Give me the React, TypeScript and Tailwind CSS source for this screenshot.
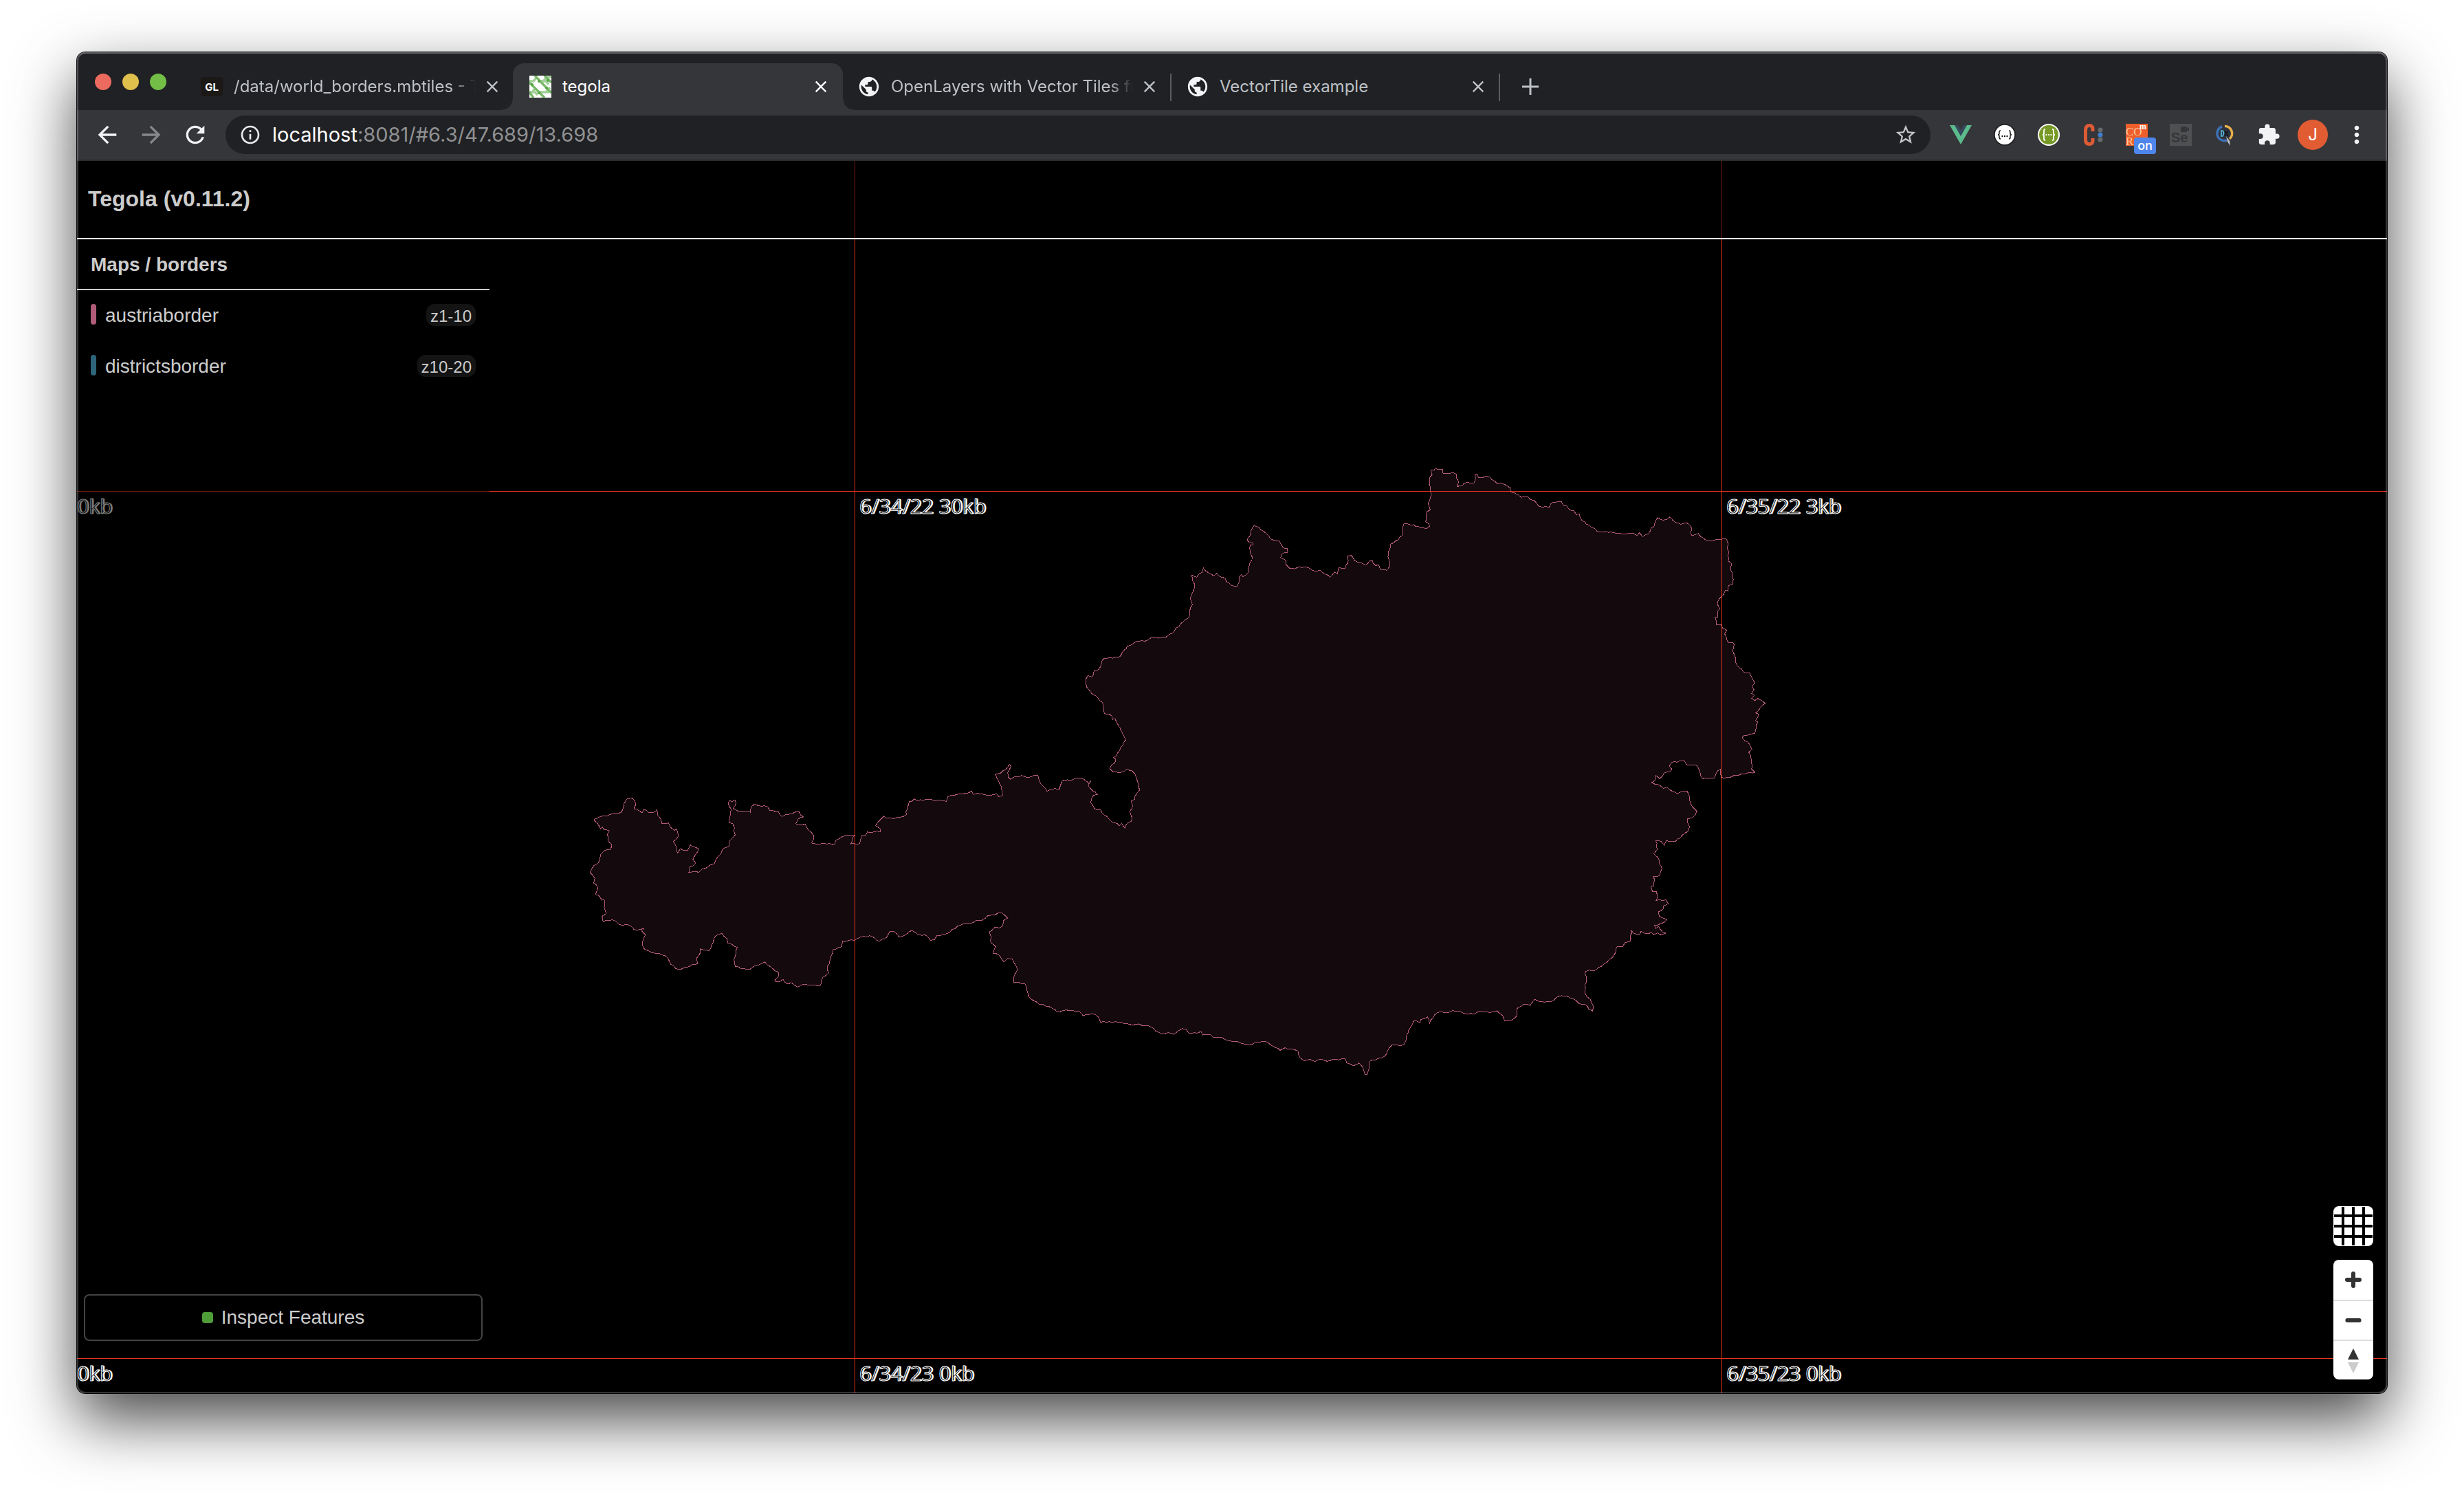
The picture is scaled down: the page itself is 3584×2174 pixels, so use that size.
import type { ReactNode } from "react";
import {
  MdArrowBack,
  MdArrowForward,
  MdClose,
  MdExtension,
  MdInfoOutline,
  MdMoreVert,
  MdPublic,
  MdRefresh,
  MdStarBorder,
} from "react-icons/md";

/* ------------------------------------------------------------------ */
/* Country outline, stored as sections with their own origin and scale */
/* ------------------------------------------------------------------ */

type Section = { x: number; y: number; sx: number; sy: number; points: string };

const sections: Section[] = [
  {
    x: 840,
    y: 1080,
    sx: 1.823,
    sy: 3,
    points:
      "33,566 40,545 57,520 62,487 72,470 87,466 91,452 89,440 81,430 79,400 85,385 77,380 70,378 66,368 61,376 56,360 45,340 45,333 70,320 95,310 117,302 123,268 130,247 143,241 152,252 154,270 150,290 165,298 171,306 176,291 190,305 205,302 211,292 213,318 220,330 223,354 241,350 247,370 257,382 263,378 267,408 262,422 254,430 261,450 265,481 273,462 280,469 292,469 299,446 305,452 315,458 321,462 313,487 306,508 313,525 306,538 298,543 295,566 305,563 315,562 321,566 330,552 341,547 352,533 363,528 371,500 380,485 385,463 401,452 402,430 411,415 418,403 416,370 412,354 402,348 402,330 408,290 400,265 402,253 410,257 418,250 420,262 412,285 425,298 458,303 462,278 469,268 480,275 504,280 510,295 533,302 542,322 560,313 588,301 592,316 599,323 585,333 579,354 588,358 603,354 608,370 626,405 621,438 630,441 683,441 684,427 700,412 718,404 735,403 725,441 748,440 752,408 765,402 769,389 803,389 802,373 790,362 798,345 812,321 820,330 855,326 872,315 874,290 880,257 886,257 893,245 901,254 925,247 940,249 965,252 978,256 982,236 1000,229 1012,223 1035,220 1045,212 1050,226 1060,221 1080,226 1095,230 1112,224 1117,235 1127,231 1125,205 1116,165 1108,138 1122,132 1135,118 1146,94 1149,102 1141,130 1142,150 1148,160 1160,148 1178,143 1192,153 1210,143 1221,143 1224,165 1236,192 1245,212 1256,203 1277,204 1284,170 1290,163 1308,164 1322,154 1342,159 1358,178 1361,165 1354,185 1366,210 1378,226 1368,230 1361,262 1372,290 1387,293 1390,305 1410,335 1437,363 1443,352 1452,373 1459,350 1469,342 1470,325 1465,300 1472,275 1468,255 1478,247 1478,235 1484,220 1491,205 1486,175 1482,152 1470,122 1456,115 1448,128 1436,130 1420,127 1411,113 1416,98 1425,88 1427,72 1422,65 1437,35",
  },
  {
    x: 1400,
    y: 660,
    sx: 2.24,
    sy: 2.8,
    points:
      "524,1176 531,1166 527,1152 518,1130 513,1115 504,1098 497,1078 489,1082 486,1066 463,1058 459,1035 456,1012 440,992 416,967 405,950 402,935 403,915 408,903 422,908 428,885 444,878 452,855 461,833 508,829 520,810 537,783 555,774 566,763 594,763 617,746 658,749 690,722 712,690 736,669 740,640 749,613 743,592 749,567 757,542 751,520 748,495 763,502 780,483 785,465 802,484 818,497 827,486 840,500 855,506 861,522 886,539 895,538 903,518 901,500 908,491 914,500 933,480 931,465 943,432 937,395 937,372 946,371 946,362 935,362 927,350 937,332 941,308 950,292 966,299 990,325 1004,346 1015,352 1032,355 1045,383 1058,386 1060,400 1042,407 1036,422 1053,433 1055,452 1065,465 1082,468 1095,461 1130,465 1150,478 1165,474 1182,490 1198,503 1211,482 1222,488 1227,463 1247,467 1257,435 1253,417 1266,413 1278,435 1300,444 1313,453 1334,432 1346,455 1356,451 1363,473 1382,474 1391,460 1388,405 1395,367 1420,350 1434,330 1434,300 1438,285 1472,288 1475,295 1510,305 1522,295 1519,285 1509,277 1513,235 1524,229 1517,200 1528,165 1521,125 1521,98 1530,85 1526,68",
  },
  {
    x: 2040,
    y: 660,
    sx: 2.8,
    sy: 3,
    points:
      "118,70 128,71 135,62 145,69 163,67 164,84 185,87 205,82 221,89 220,105 229,122 222,142 243,139 262,124 289,129 297,105 295,88 305,90 310,104 323,105 340,97 355,101 385,130 415,133 438,147 441,167 470,178 485,190 512,188 520,199 535,203 555,229 598,233 612,211 648,210 655,225 670,228 680,245 698,248 708,265 720,262 724,280 748,306 805,341 850,341 870,346 910,349 930,346 956,356 965,344 978,361 1002,348 1014,322 1024,318 1031,290 1041,278 1052,287 1075,287 1089,275 1102,291 1133,307 1160,302 1174,315 1177,357 1205,348 1222,365 1237,377 1262,380 1275,374 1300,375 1305,368 1319,372 1326,390 1323,412 1330,430 1327,467 1340,478 1338,510 1348,548 1343,571 1328,574 1325,597 1315,595 1307,615 1292,630 1283,645 1284,660 1293,675 1285,685 1284,712 1273,712 1279,745 1298,746 1300,757 1321,770 1312,785 1328,823 1345,823 1351,832 1345,860 1353,880 1363,923 1397,955 1414,955 1424,980 1435,998 1424,1015 1432,1030 1422,1045 1433,1052 1422,1067 1435,1076 1447,1067 1465,1077 1477,1089 1455,1112 1438,1130 1451,1135 1437,1163 1448,1170 1440,1195 1434,1220 1410,1226 1388,1230 1384,1240 1407,1258 1423,1289 1410,1302 1420,1330 1422,1375 1435,1389 1390,1396 1320,1412 1297,1411 1295,1376 1277,1394 1271,1414 1222,1417 1212,1390 1202,1362 1155,1354 1149,1339 1130,1339 1095,1347 1087,1362 1097,1375 1090,1386 1065,1393 1047,1417 1033,1403 1028,1425 1015,1434 1052,1449 1063,1460 1077,1453 1100,1472 1120,1481 1140,1472 1160,1473 1170,1497",
  },
  {
    x: 1420,
    y: 1080,
    sx: 1.4255,
    sy: 3,
    points:
      "1482,270 1486,282 1494,298 1486,327 1474,333 1479,365 1475,388 1463,405 1450,430 1431,427 1426,446 1420,430 1409,427 1412,465 1405,485 1413,500 1422,550 1417,580 1404,584 1407,600 1405,625 1399,628 1402,648 1410,650 1413,670 1410,688 1430,685 1435,703 1425,712 1424,728 1415,738 1416,757 1432,773 1425,785 1406,797 1409,810 1415,802 1423,825 1429,831 1420,838 1412,830 1405,837 1400,829 1385,831 1378,823 1376,836 1363,832 1358,818 1356,867 1345,873 1340,890 1329,890 1323,925 1308,957 1290,980 1285,992 1265,997 1262,1003 1265,1020 1262,1080 1266,1108 1273,1118 1280,1150 1278,1170 1270,1162 1262,1142 1250,1138 1238,1117 1226,1106 1214,1104 1203,1112 1192,1130 1172,1130 1158,1119 1148,1147 1136,1140 1122,1158 1121,1190 1108,1213 1095,1213 1090,1188 1080,1170 1070,1175 1040,1174 1033,1184 1018,1185 1005,1174 988,1168 975,1178 962,1174 950,1188 940,1224 936,1196 922,1207 920,1222 907,1214 900,1243 891,1282 888,1314 879,1323 863,1318 857,1330 851,1357 840,1375 820,1384 814,1395 814,1425 811,1446 806,1447 801,1415 794,1397 782,1409 768,1397 765,1377 745,1382 728,1390 715,1380 703,1390 692,1381 680,1388 671,1374 667,1345 652,1336 640,1331 630,1342 615,1324 600,1304 580,1306 565,1318 545,1307 525,1301 510,1287 490,1284 485,1273 470,1275 466,1260 458,1267 440,1266 435,1250 427,1247 418,1259 410,1272 398,1265 383,1270 362,1240 337,1227 320,1230 288,1217 258,1220 253,1197 240,1181 222,1192 213,1172 187,1166 167,1173 152,1152 130,1140 118,1124 109,1107 105,1080 101,1053 88,1046 78,1045 79,1015 85,993 80,965 75,945 65,941 57,957 48,928 35,920 40,890 31,875 31,850 27,825 36,808 53,803 57,775 65,765 58,750 47,742 37,752 22,757 12,774",
  },
  {
    x: 840,
    y: 1080,
    sx: 1.823,
    sy: 3,
    points:
      "1057,774 1050,785 1030,788 1008,799 980,833 953,842 946,860 936,862 922,838 905,838 887,820 868,840 853,848 840,824 829,824 815,855 799,867 786,850 775,842 750,849 733,862 702,866 700,890 678,903 672,940 663,975 666,1005 650,1024 643,1062 630,1058 603,1053 585,1066 568,1048 557,1052 545,1033 535,1044 522,1040 534,1018 532,1000 517,985 497,957 486,965 450,990 440,984 418,975 415,945 424,893 398,873 397,855 383,832 367,842 357,880 349,908 326,900 323,925 317,938 319,962 290,980 268,989 247,967 240,940 215,918 195,915 175,897 173,865 180,838 170,822 175,812 158,819 135,795 110,793 93,772 68,781 65,758 76,745 71,718 71,685 65,687 57,667 48,662 54,632 43,612 46,592",
  },
];

function buildOutline(): string {
  const pts = sections.flatMap((s) =>
    s.points.split(" ").map((p) => {
      const [px, py] = p.split(",").map(Number);
      return [s.x + px / s.sx, s.y + py / s.sy];
    }),
  );
  const out: string[] = [];
  pts.forEach(([ax, ay], i) => {
    const [bx, by] = pts[(i + 1) % pts.length];
    const length = Math.hypot(bx - ax, by - ay);
    const steps = Math.max(1, Math.floor(length / 4));
    for (let k = 0; k < steps; k++) {
      const t = k / steps;
      const wobble = k === 0 ? 0 : (((i * 7 + k * 13) % 5) - 2) * 0.5;
      const nx = -(by - ay) / (length || 1);
      const ny = (bx - ax) / (length || 1);
      out.push(`${(ax + (bx - ax) * t + nx * wobble).toFixed(1)} ${(ay + (by - ay) * t + ny * wobble).toFixed(1)}`);
    }
  });
  return `M${out.join("L")}Z`;
}

const outline = buildOutline();

/* ------------------------------------------------------------------ */
/* Browser chrome                                                      */
/* ------------------------------------------------------------------ */

function GlFavicon() {
  return (
    <span className="flex h-7 w-8 items-center justify-center rounded-sm bg-[#1b1816] font-['Inter'] text-[15px] font-bold leading-none text-white">
      GL
    </span>
  );
}

function TegolaFavicon() {
  return (
    <svg viewBox="0 0 32 32" className="h-8 w-8 bg-white" aria-hidden="true">
      <g stroke="#a3cf98" strokeWidth="3.5" fill="none">
        <path d="M0 8h6l5-6M12 8h12l4 5M20 8l6-6h6M0 24h8l4 4M12 24h14l6-1M4 24l5-6M24 24l6-7" />
        <path d="M0 10l22 22M8 0l24 25M0 24l6 8M22 0l10 10" stroke="#79b96a" />
      </g>
      <g fill="#56a544">
        <circle cx="14" cy="8" r="2" />
        <circle cx="27" cy="7" r="2" />
        <circle cx="4" cy="13" r="2" />
        <circle cx="14" cy="25" r="2" />
        <circle cx="25" cy="18" r="2" />
      </g>
    </svg>
  );
}

function Globe() {
  return <MdPublic className="h-[34px] w-[34px] shrink-0 text-[#f1f3f4]" aria-hidden="true" />;
}

type TabProps = { icon: ReactNode; title: string; active?: boolean; fade?: boolean; divider?: boolean };

function Tab({ icon, title, active, fade, divider }: TabProps) {
  return (
    <div
      className={
        active
          ? "relative -mr-0.5 flex h-[68px] w-[480px] items-center rounded-t-2xl bg-[#35363a] pl-6 text-white"
          : "relative flex h-[68px] w-[478px] items-center pl-6 text-[#bdc1c6]"
      }
    >
      {active && (
        <>
          <span className="absolute bottom-0 right-full h-4 w-4 bg-[radial-gradient(circle_at_0_0,transparent_15px,#35363a_16px)]" />
          <span className="absolute bottom-0 left-full h-4 w-4 bg-[radial-gradient(circle_at_100%_0,transparent_15px,#35363a_16px)]" />
        </>
      )}
      <span className="flex w-8 shrink-0 items-center justify-center">{icon}</span>
      <a
        href="#"
        className={
          fade
            ? "ml-4 w-[352px] overflow-hidden whitespace-nowrap text-2xl [mask-image:linear-gradient(90deg,#000_318px,transparent_352px)]"
            : "ml-4 w-[352px] overflow-hidden whitespace-nowrap text-2xl"
        }
      >
        {title}
      </a>
      <button type="button" aria-label={`Close ${title}`} className="ml-2.5">
        <MdClose className="h-7 w-7" />
      </button>
      {divider && <span className="absolute -right-0.5 top-[15px] h-10 w-0.5 bg-[#5b5d61]" />}
    </div>
  );
}

function TabStrip() {
  return (
    <div className="flex h-[84px] items-end bg-[#202124] pl-[26px]">
      <div className="mb-[29px] flex gap-4">
        <button type="button" aria-label="Close window" className="h-6 w-6 rounded-full bg-[#ed6a5e]" />
        <button type="button" aria-label="Minimize window" className="h-6 w-6 rounded-full bg-[#e0c04c]" />
        <button type="button" aria-label="Zoom window" className="h-6 w-6 rounded-full bg-[#72be47]" />
      </div>
      <div className="ml-[26px] flex">
        <Tab icon={<GlFavicon />} title="/data/world_borders.mbtiles - T" fade />
        <Tab icon={<TegolaFavicon />} title="tegola" active />
        <Tab icon={<Globe />} title="OpenLayers with Vector Tiles fr" fade divider />
        <Tab icon={<Globe />} title="VectorTile example" divider />
      </div>
      <button type="button" aria-label="New tab" className="mb-[22px] ml-[34px]">
        <svg viewBox="0 0 24 24" className="h-6 w-6" fill="none" stroke="#bdc1c6" strokeWidth="3">
          <path d="M12 0v24M0 12h24" />
        </svg>
      </button>
    </div>
  );
}

function Slot({ label, children }: { label: string; children: ReactNode }) {
  return (
    <button type="button" aria-label={label} className="relative flex h-14 w-16 items-center justify-center">
      {children}
    </button>
  );
}

function Extensions() {
  return (
    <div className="flex">
      <Slot label="Vue devtools">
        <svg viewBox="0 0 32 32" className="h-8 w-8">
          <path d="M6 2h6l4 7 4-7h6L16 19z" fill="#35495e" opacity=".9" />
          <path d="M0 2h7l9 16 9-16h7L16 30z" fill="#5cbb8c" />
        </svg>
      </Slot>
      <Slot label="JSON viewer">
        <svg viewBox="0 0 32 32" className="h-8 w-8">
          <circle cx="16" cy="16" r="15" fill="#fff" stroke="#1b1b1b" strokeWidth="1.5" />
          <path
            d="M10 10q-2 0-2 2v2q0 2-2 2 2 0 2 2v2q0 2 2 2M22 10q2 0 2 2v2q0 2 2 2-2 0-2 2v2q0 2-2 2"
            fill="none"
            stroke="#111"
            strokeWidth="1.4"
          />
          <path d="M11.500 18h2M15 18h2M18.500 18h2" stroke="#111" strokeWidth="2" />
        </svg>
      </Slot>
      <Slot label="API viewer">
        <svg viewBox="0 0 32 32" className="h-8 w-8">
          <circle cx="16" cy="16" r="16" fill="#fff" />
          <circle cx="16" cy="16" r="14" fill="#779a27" />
          <path
            d="M11 8q-2 0-2 2v4q0 2-2 2 2 0 2 2v4q0 2 2 2M21 8q2 0 2 2v4q0 2 2 2-2 0-2 2v4q0 2-2 2"
            fill="none"
            stroke="#fff"
            strokeWidth="1.800"
          />
          <path d="M11.500 16h2M15 16h2M18.500 16h2" stroke="#fff" strokeWidth="2" />
        </svg>
      </Slot>
      <Slot label="ClearCache">
        <svg viewBox="0 0 32 32" className="h-8 w-8">
          <path
            d="M16 11V8q0-5.500-5-5.500T5.500 9v14q0 6.500 5.500 6.500t5-5.500v-3"
            fill="none"
            stroke="#dd5b35"
            strokeWidth="5"
          />
          <circle cx="27" cy="9" r="3.500" fill="#68696b" />
          <circle cx="27" cy="16" r="3.500" fill="#3d7fd0" />
          <circle cx="27" cy="23" r="3.500" fill="#68696b" />
        </svg>
      </Slot>
      <Slot label="CORS on">
        <span className="relative block h-8 w-8 bg-[#ef5f2c] text-left font-['Liberation_Serif'] text-[17px] leading-[14px] text-[#fbc9a0]">
          <span className="block pt-[5px]">CO</span>
          <span className="block">R</span>
          <span className="absolute right-0.5 top-0 text-xs font-bold leading-[9px] text-white">m</span>
        </span>
        <span className="absolute bottom-0 right-1 flex h-6 w-8 items-center justify-center rounded bg-[#4f86ec] text-lg font-medium leading-none text-white">
          on
        </span>
      </Slot>
      <Slot label="Selenium IDE">
        <span className="relative flex h-8 w-8 items-end bg-[#4f5051] pb-0.5 pl-0.5 font-['Liberation_Sans'] text-xl font-bold leading-none text-[#35363a]">
          Se
          <svg viewBox="0 0 12 8" className="absolute right-1 top-1 h-2 w-3" fill="#35363a">
            <path d="M0 0h9v3l3-2v6l-3-2v3H0z" />
          </svg>
        </span>
      </Slot>
      <Slot label="Query inspector">
        <svg viewBox="0 0 32 32" className="h-8 w-8" fill="none">
          <circle cx="16" cy="14" r="8.500" fill="#2c3440" />
          <path d="M16 3.500a10.500 10.500 0 0 1 7 18.500" stroke="#e8b04b" strokeWidth="3.500" />
          <path d="M12 4a10.500 10.500 0 1 0 7 20" stroke="#3e70b5" strokeWidth="3.500" />
          <path d="M11 10v8h2q3-4 0-8z" stroke="#5ec0e8" strokeWidth="1.500" />
          <path d="M16 10l5 8M21 10l-5 8" stroke="#15181d" strokeWidth="1.800" />
          <path d="M18 18l2 8 4 6-1-7z" fill="#c4c7ca" />
        </svg>
      </Slot>
      <Slot label="Extensions">
        <MdExtension className="h-[34px] w-[34px] text-[#f1f3f4]" />
      </Slot>
      <Slot label="Profile">
        <span className="flex h-11 w-11 items-center justify-center rounded-full bg-[#e25c33] text-2xl text-white">J</span>
      </Slot>
      <Slot label="Menu">
        <MdMoreVert className="h-10 w-10 text-[#f1f3f4]" />
      </Slot>
    </div>
  );
}

function Toolbar() {
  return (
    <div className="flex h-[74px] items-start border-b-2 border-[#2b2b2c] bg-[#35363a] pl-3 pr-3 pt-2">
      <Slot label="Back">
        <MdArrowBack className="h-10 w-10 text-[#f1f3f4]" />
      </Slot>
      <Slot label="Forward">
        <MdArrowForward className="h-10 w-10 text-[#86888a]" />
      </Slot>
      <Slot label="Reload">
        <MdRefresh className="h-10 w-10 text-[#f1f3f4]" />
      </Slot>
      <div className="ml-3 mr-3 flex h-14 flex-1 items-center rounded-full bg-[#202124] pl-5 pr-[19px]">
        <MdInfoOutline className="h-8 w-8 text-[#e8eaed]" aria-hidden="true" />
        <div
          role="textbox"
          aria-label="Address"
          className="ml-4 flex-1 whitespace-nowrap text-[29px] leading-8 text-[#909193]"
        >
          <span className="text-white">localhost</span>:8081/#6.3/47.689/13.698
        </div>
        <button type="button" aria-label="Bookmark this page">
          <MdStarBorder className="h-[34px] w-[34px] text-[#c4c7ca]" />
        </button>
      </div>
      <Extensions />
    </div>
  );
}

/* ------------------------------------------------------------------ */
/* Map page                                                            */
/* ------------------------------------------------------------------ */

const label =
  "absolute whitespace-pre font-['Open_Sans'] text-[30px] leading-8 text-black [-webkit-text-stroke:1px_#fff] [text-shadow:2px_0_0_#fff]";

function MapCanvas() {
  return (
    <div className="absolute inset-0 overflow-hidden">
      <svg
        viewBox="112 234 3360 1792"
        preserveAspectRatio="xMinYMin slice"
        className="h-full w-full"
        aria-hidden="true"
      >
        <path d={outline} fill="#14090d" stroke="#b05a74" strokeWidth="1" shapeRendering="crispEdges" />
        <g fill="#e8351f" shapeRendering="crispEdges">
          <path d="M1243 234h1v1792h-1zM2504 234h1v1792h-1zM112 714h3360v1H112zM112 1975h3360v1H112z" />
        </g>
      </svg>
      <span className={`${label} left-0 top-[486px]`}>0kb</span>
      <span className={`${label} left-[1138px] top-[486px]`}>6/34/22 30kb</span>
      <span className={`${label} left-[2399px] top-[486px]`}>6/35/22 3kb</span>
      <span className={`${label} left-0 top-[1747px]`}>0kb</span>
      <span className={`${label} left-[1138px] top-[1747px]`}>6/34/23 0kb</span>
      <span className={`${label} left-[2399px] top-[1747px]`}>6/35/23 0kb</span>
    </div>
  );
}

function Layer({ color, name, zoom }: { color: string; name: string; zoom: string }) {
  return (
    <li className="flex h-[74px] items-start justify-between px-5 pt-5">
      <span className="flex">
        <span className={`h-[30px] w-2 rounded-[4px] ${color}`} />
        <span className="ml-[13px] text-[28px] leading-[34px]">{name}</span>
      </span>
      <span className="h-8 rounded-xl bg-[#141414] px-1.5 text-2xl leading-9">{zoom}</span>
    </li>
  );
}

function Sidebar() {
  return (
    <aside className="flex w-[600px] flex-1 flex-col bg-black/50 pb-2">
      <h2 className="h-[74px] border-b-2 border-[#ccc] px-5 pt-5 text-[28px] font-bold leading-[34px]">
        Maps / borders
      </h2>
      <ul>
        <Layer color="bg-[#b05c78]" name="austriaborder" zoom="z1-10" />
        <Layer color="bg-[#2d657b]" name="districtsborder" zoom="z10-20" />
      </ul>
      <button
        type="button"
        className="mx-2.5 mt-auto flex h-[68px] items-center justify-center gap-3 rounded-lg border-2 border-[#444] text-[28px] leading-8"
      >
        <span className="h-4 w-4 rounded bg-[#4f9d38]" />
        Inspect Features
      </button>
    </aside>
  );
}

function MapControls() {
  return (
    <div className="absolute bottom-5 right-5 flex flex-col gap-5">
      <button type="button" aria-label="Toggle tile grid" className="h-[58px] w-[58px] overflow-hidden rounded-lg bg-white">
        <svg viewBox="0 0 58 58" className="h-full w-full" stroke="#000" strokeWidth="4">
          <path d="M14 1v56M29 1v56M44 1v56M1 14h56M1 29h56M1 44h56" />
        </svg>
      </button>
      <div className="overflow-hidden rounded-lg bg-white">
        <button type="button" aria-label="Zoom in" className="block h-[58px] w-[58px]">
          <svg viewBox="0 0 58 58" className="h-full w-full" stroke="#333" strokeWidth="6" strokeLinecap="round">
            <path d="M29 20v18M20 29h18" />
          </svg>
        </button>
        <button type="button" aria-label="Zoom out" className="block h-[58px] w-[58px] border-t-2 border-[#ddd]">
          <svg viewBox="0 0 58 58" className="h-full w-full" stroke="#333" strokeWidth="6" strokeLinecap="round">
            <path d="M20 29h18" />
          </svg>
        </button>
        <button type="button" aria-label="Reset bearing" className="block h-[58px] w-[58px] border-t-2 border-[#ddd]">
          <svg viewBox="0 0 58 56" className="h-full w-full">
            <path d="M21 27l8-16 8 16z" fill="#333" />
            <path d="M21 31l8 16 8-16z" fill="#ccc" />
          </svg>
        </button>
      </div>
    </div>
  );
}

function MapPage() {
  return (
    <main className="relative flex flex-1 flex-col bg-black font-['Liberation_Sans',sans-serif] text-[#ccc]">
      <MapCanvas />
      <div className="relative flex flex-1 flex-col pb-[68px]">
        <header className="h-[114px] border-b-2 border-[#e8ecea] bg-black/50 px-4 pt-9">
          <h1 className="text-[32px] font-bold leading-[38px]">Tegola (v0.11.2)</h1>
        </header>
        <Sidebar />
      </div>
      <MapControls />
    </main>
  );
}

export default function App() {
  return (
    <div className="flex min-h-screen flex-col bg-white px-28 pb-[148px] pt-[76px] font-['Inter',sans-serif]">
      <div className="relative flex flex-1 flex-col rounded-xl shadow-[0_0_0_1px_#050505,0_38px_90px_rgba(0,0,0,0.72)]">
        <div className="flex flex-1 flex-col overflow-hidden rounded-xl">
          <TabStrip />
          <Toolbar />
          <MapPage />
        </div>
        <div className="pointer-events-none absolute inset-0 rounded-xl border-2 border-white/20 border-t-white/30" />
      </div>
    </div>
  );
}
